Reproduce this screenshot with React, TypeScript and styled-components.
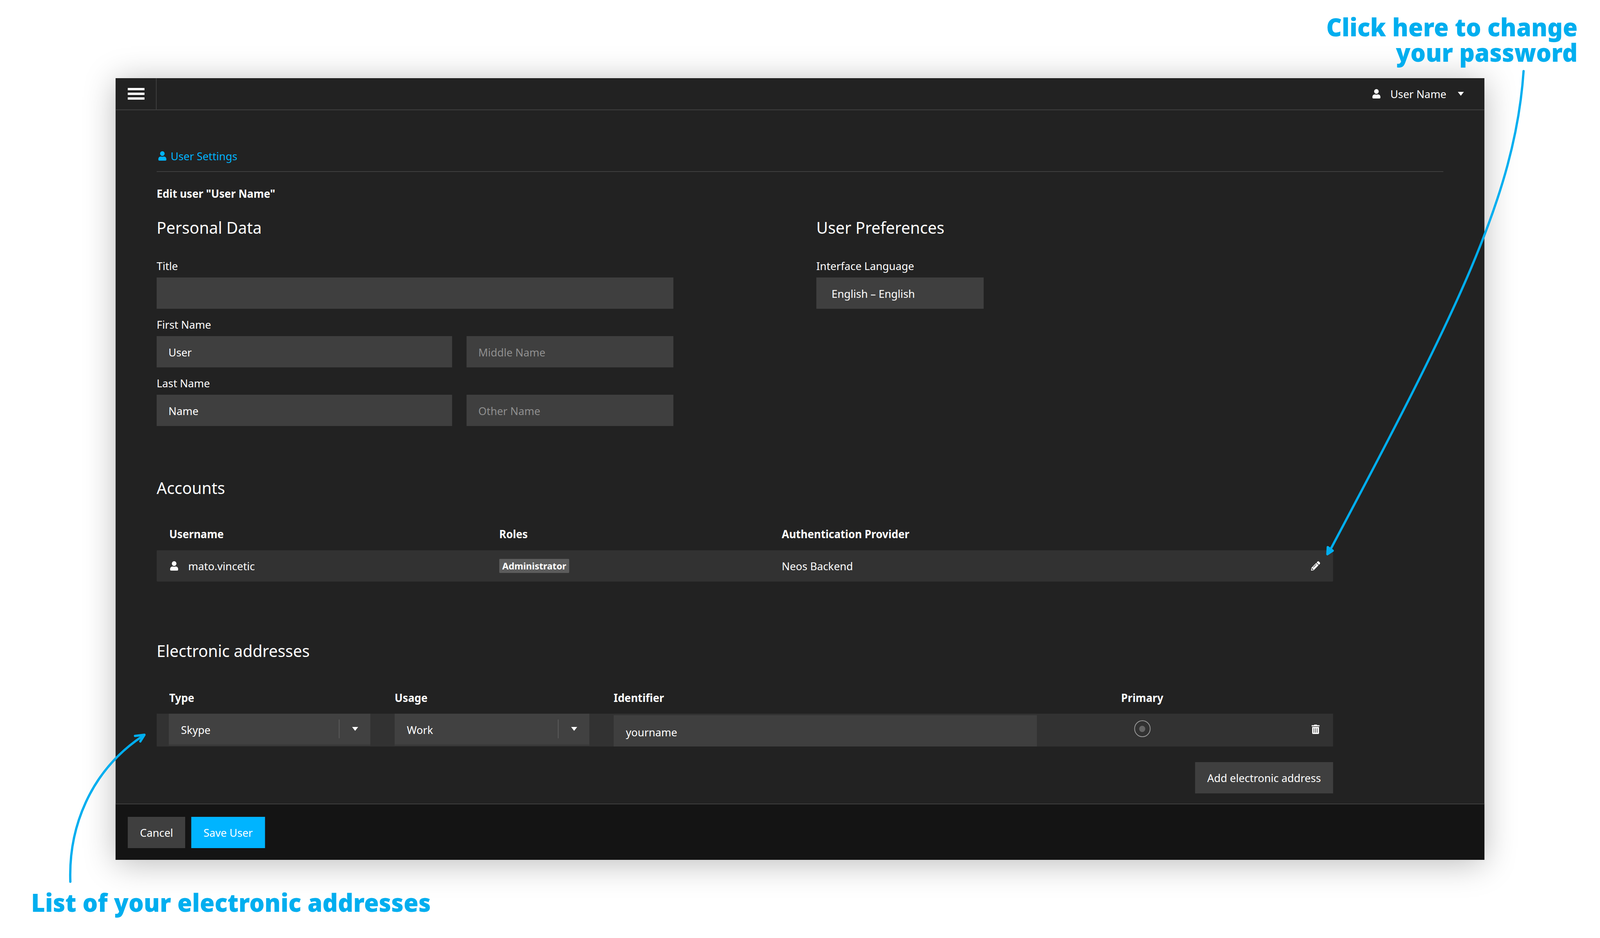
import styled, { createGlobalStyle } from 'styled-components';
import { FaUser, FaPencilAlt, FaTrashAlt } from 'react-icons/fa';

const PAGE_WIDTH = 4208;

const GlobalStyle = createGlobalStyle`
  html, body {
    margin: 0;
    padding: 0;
    background: #fff;
    overflow: hidden;
  }
  * {
    box-sizing: border-box;
  }
`;

const Page = styled.div`
  position: relative;
  width: ${PAGE_WIDTH}px;
  height: 2400px;
  padding: 200px 0 0 304px;
  background: #fff;
  overflow: hidden;
  transform-origin: 0 0;
  font-family: "Noto Sans", sans-serif;
  font-size: 28px;
  color: #fff;
`;

const Window = styled.div`
  display: flex;
  flex-direction: column;
  width: 3600px;
  height: 2000px;
  background: #222;
  box-shadow: 0 8px 80px rgba(0, 0, 0, 0.28);
`;

const TopBar = styled.header`
  display: flex;
  align-items: center;
  flex: none;
  height: 82px;
  border-bottom: 2px solid #3f3f3f;
`;

const MenuCell = styled.div`
  display: flex;
  flex-direction: column;
  justify-content: center;
  gap: 6px;
  width: 108px;
  height: 80px;
  padding-left: 32px;
  border-right: 2px solid #3f3f3f;
`;

const MenuBar = styled.span`
  display: block;
  width: 44px;
  height: 6px;
  background: #fff;
`;

const UserMenu = styled.div`
  display: flex;
  align-items: center;
  margin-left: auto;
  padding-right: 54px;
  line-height: 40px;
`;

const UserName = styled.span`
  margin: 0 30px 0 25px;
`;

const Caret = styled.span`
  display: block;
  width: 0;
  height: 0;
  border-left: 8px solid transparent;
  border-right: 8px solid transparent;
  border-top: 10px solid #fff;
`;

const Main = styled.main`
  flex: 1;
  padding: 98px 108px 0;
  overflow: hidden;
`;

const Breadcrumb = styled.div`
  display: flex;
  align-items: center;
  gap: 10px;
  height: 60px;
  padding: 0 0 20px 3px;
  border-bottom: 2px solid #3f3f3f;
  line-height: 40px;
  color: #00b4ff;
`;

const EditTitle = styled.div`
  margin-top: 35px;
  line-height: 40px;
  font-weight: 700;
`;

const SectionTitle = styled.h2<{ $top: number }>`
  margin: ${(p) => p.$top}px 0 0;
  font-size: 42px;
  font-weight: 400;
  line-height: 60px;
`;

const Columns = styled.div`
  display: grid;
  grid-template-columns: 1735px 1fr;
`;

const FieldLabel = styled.div<{ $top?: number }>`
  margin-top: ${(p) => p.$top ?? 20}px;
  line-height: 40px;
`;

const FieldRow = styled.div`
  display: flex;
  gap: 38px;
  margin-top: 10px;
`;

const TextBox = styled.div<{ $width: number; $muted?: boolean }>`
  width: ${(p) => p.$width}px;
  height: 80px;
  padding: 0 31px;
  background: #3f3f3f;
  line-height: 82px;
  color: ${(p) => (p.$muted ? '#8f8f8f' : '#fff')};
`;

const LanguageBox = styled.div`
  width: 440px;
  height: 80px;
  margin-top: 10px;
  padding-left: 40px;
  background: #3f3f3f;
  line-height: 82px;
`;

const TableHead = styled.div<{ $top: number; $columns: string }>`
  display: grid;
  grid-template-columns: ${(p) => p.$columns};
  width: 3094px;
  margin-top: ${(p) => p.$top}px;
  line-height: 40px;
  font-weight: 700;
`;

const HeadCell = styled.div<{ $inset?: number; $centered?: boolean }>`
  padding-left: ${(p) => p.$inset ?? 0}px;
  text-align: ${(p) => (p.$centered ? 'center' : 'left')};
`;

const AccountRow = styled.div`
  display: grid;
  grid-template-columns: 901px 743px 1fr 24px;
  align-items: center;
  width: 3094px;
  height: 80px;
  margin-top: 22px;
  padding-right: 34px;
  background: #323232;
  border-radius: 2px;
  line-height: 40px;
`;

const AccountName = styled.div`
  display: flex;
  align-items: center;
  gap: 25px;
  padding-left: 34px;
`;

const RoleBadge = styled.span`
  justify-self: start;
  padding: 0 8px;
  background: #5c5c5c;
  border-radius: 2px;
  font-size: 24px;
  font-weight: 700;
  line-height: 36px;
`;

const AddressRow = styled.div`
  display: grid;
  grid-template-columns: 594px 576px 1113px 554px 1fr;
  width: 3094px;
  height: 84px;
  margin-top: 21px;
  padding-left: 32px;
  background: #323232;
`;

const SelectBox = styled.div`
  display: flex;
  align-items: center;
  height: 82px;
  margin-right: 64px;
  padding-left: 32px;
  background: #414141;
  border-bottom: 4px solid #3b3b3b;
`;

const SelectValue = styled.span`
  flex: 1;
  padding-top: 4px;
`;

const SelectToggle = styled.span`
  display: flex;
  align-items: center;
  justify-content: center;
  width: 83px;
  height: 48px;
  border-left: 2px solid #5c5c5c;
`;

const IdentifierBox = styled.div`
  align-self: end;
  height: 80px;
  padding-left: 32px;
  background: #3f3f3f;
  line-height: 86px;
`;

const PrimaryCell = styled.div`
  display: flex;
  justify-content: center;
  padding-top: 17px;
`;

const Radio = styled.span`
  display: flex;
  align-items: center;
  justify-content: center;
  width: 43px;
  height: 43px;
  border: 2px solid #999;
  border-radius: 50%;

  &::after {
    content: '';
    width: 16px;
    height: 16px;
    border-radius: 50%;
    background: #666;
  }
`;

const RemoveCell = styled.div`
  display: flex;
  justify-content: flex-end;
  padding: 28px 34px 0 0;
`;

const AddRow = styled.div`
  display: flex;
  justify-content: flex-end;
  width: 3094px;
  margin-top: 40px;
`;

const Button = styled.button<{ $primary?: boolean }>`
  height: 80px;
  padding: 0 32px;
  border: 0;
  background: ${(p) => (p.$primary ? '#00b4ff' : '#3f3f3f')};
  color: #fff;
  font: inherit;
  line-height: 80px;
`;

const Footer = styled.footer`
  display: flex;
  gap: 16px;
  flex: none;
  height: 144px;
  padding: 32px 32px 0;
  background: #141414;
  border-top: 2px solid #3f3f3f;
`;

const Note = styled.div<{ $top: number; $left?: number; $right?: number }>`
  position: absolute;
  top: ${(p) => p.$top}px;
  left: ${(p) => (p.$left !== undefined ? `${p.$left}px` : 'auto')};
  right: ${(p) => (p.$right !== undefined ? `${p.$right}px` : 'auto')};
  font-family: "Noto Sans", sans-serif;
  font-size: 63px;
  font-weight: 900;
  line-height: 65px;
  text-align: right;
  white-space: nowrap;
  color: #00aeef;
`;

const ArrowLayer = styled.svg`
  position: absolute;
  top: 0;
  left: 0;
  pointer-events: none;
`;

const Arrows = () => (
  <ArrowLayer width="4208" height="2400" viewBox="0 0 4208 2400" fill="none" stroke="#00aeef" strokeWidth="6" strokeLinecap="round" strokeLinejoin="round">
    <path d="M4007 182 C3985 500 3830 800 3498 1408" />
    <path d="M3491 1418 L3492 1400 L3505 1409 Z" fill="#00aeef" />
    <path d="M185 2256 C180 2120 235 1975 374 1884" />
    <path d="M355 1883 L380 1880 L369 1897" />
  </ArrowLayer>
);

const App = () => {
  // the browser caps the window width below the page width, so fit it in
  const fit = Math.min(1, window.innerWidth / PAGE_WIDTH);

  return (
    <Page style={{ transform: `scaleX(${fit})` }}>
      <GlobalStyle />
      <Window>
        <TopBar>
          <MenuCell>
            <MenuBar />
            <MenuBar />
            <MenuBar />
          </MenuCell>
          <UserMenu>
            <FaUser size={24} color="#fff" />
            <UserName>User Name</UserName>
            <Caret />
          </UserMenu>
        </TopBar>
        <Main>
          <Breadcrumb>
            <FaUser size={24} />
            User Settings
          </Breadcrumb>
          <EditTitle>Edit user "User Name"</EditTitle>
          <SectionTitle $top={37}>
            <Columns>
              <span>Personal Data</span>
              <span>User Preferences</span>
            </Columns>
          </SectionTitle>
          <Columns>
            <div>
              <FieldLabel $top={48}>Title</FieldLabel>
              <FieldRow>
                <TextBox $width={1359} />
              </FieldRow>
              <FieldLabel>First Name</FieldLabel>
              <FieldRow>
                <TextBox $width={777}>User</TextBox>
                <TextBox $width={544} $muted>Middle Name</TextBox>
              </FieldRow>
              <FieldLabel>Last Name</FieldLabel>
              <FieldRow>
                <TextBox $width={777}>Name</TextBox>
                <TextBox $width={544} $muted>Other Name</TextBox>
              </FieldRow>
            </div>
            <div>
              <FieldLabel $top={48}>Interface Language</FieldLabel>
              <LanguageBox>English – English</LanguageBox>
            </div>
          </Columns>

          <SectionTitle $top={128}>Accounts</SectionTitle>
          <TableHead $top={68} $columns="901px 743px 1fr">
            <HeadCell $inset={33}>Username</HeadCell>
            <HeadCell>Roles</HeadCell>
            <HeadCell>Authentication Provider</HeadCell>
          </TableHead>
          <AccountRow>
            <AccountName>
              <FaUser size={24} />
              mato.vincetic
            </AccountName>
            <RoleBadge>Administrator</RoleBadge>
            <span>Neos Backend</span>
            <FaPencilAlt size={24} />
          </AccountRow>

          <SectionTitle $top={147}>Electronic addresses</SectionTitle>
          <TableHead $top={70} $columns="626px 576px 1113px 554px 1fr">
            <HeadCell $inset={33}>Type</HeadCell>
            <HeadCell>Usage</HeadCell>
            <HeadCell>Identifier</HeadCell>
            <HeadCell $centered>Primary</HeadCell>
          </TableHead>
          <AddressRow>
            <SelectBox>
              <SelectValue>Skype</SelectValue>
              <SelectToggle>
                <Caret />
              </SelectToggle>
            </SelectBox>
            <SelectBox>
              <SelectValue>Work</SelectValue>
              <SelectToggle>
                <Caret />
              </SelectToggle>
            </SelectBox>
            <IdentifierBox>yourname</IdentifierBox>
            <PrimaryCell>
              <Radio />
            </PrimaryCell>
            <RemoveCell>
              <FaTrashAlt size={24} />
            </RemoveCell>
          </AddressRow>
          <AddRow>
            <Button>Add electronic address</Button>
          </AddRow>
        </Main>
        <Footer>
          <Button>Cancel</Button>
          <Button $primary>Save User</Button>
        </Footer>
      </Window>
      <Note $top={36} $right={59}>
        Click here to change
        <br />
        your password
      </Note>
      <Note $top={2276} $left={82}>List of your electronic addresses</Note>
      <Arrows />
    </Page>
  );
};

export default App;
